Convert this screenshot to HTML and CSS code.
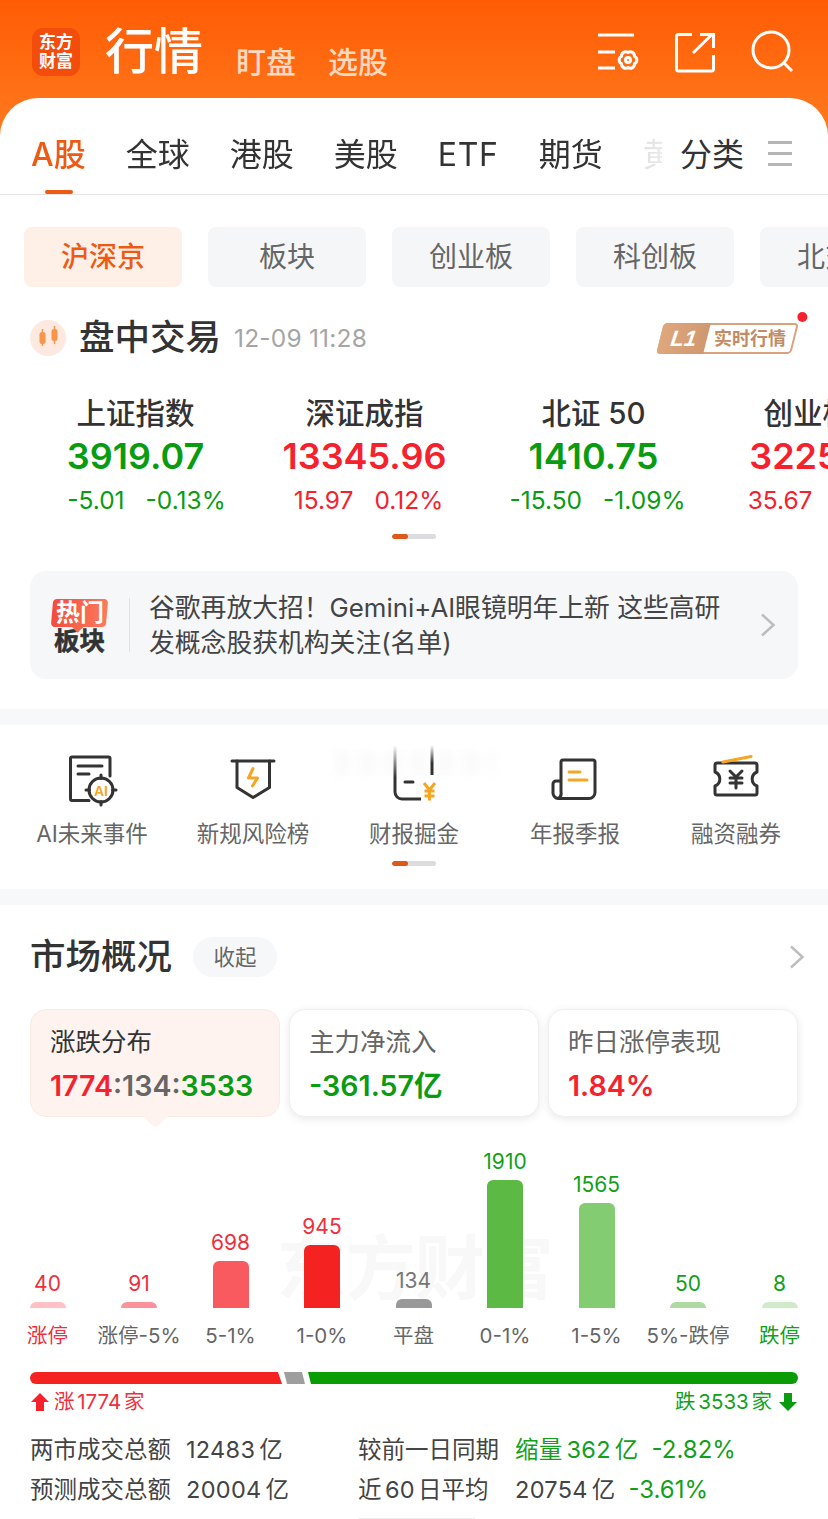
FILE: index.html
```html
<!DOCTYPE html>
<html lang="zh-CN">
<head>
<meta charset="utf-8">
<title>行情</title>
<link rel="stylesheet" href="styles.css">
</head>
<body>
<div class="page">
  <div class="top">
    <header class="header">
      <div class="logo"><span>东方</span><span>财富</span></div>
      <h1 class="title">行情</h1>
      <a class="subnav first">盯盘</a>
      <a class="subnav">选股</a>
      <div class="header-icons">
        <svg class="hicon" viewBox="0 0 44 44" fill="none" stroke="#fff" stroke-width="3">
          <path d="M2 5H38M2 22H19M2 38H19"/>
          <path d="M32 22.500A4.200 4.200 0 0 1 38.500 26.250A4.200 4.200 0 0 1 38.500 33.750A4.200 4.200 0 0 1 32 37.500A4.200 4.200 0 0 1 25.500 33.750A4.200 4.200 0 0 1 25.500 26.250A4.200 4.200 0 0 1 32 22.500z"/>
          <circle cx="32" cy="30" r="2.500"/>
        </svg>
        <svg class="hicon" viewBox="0 0 44 44" fill="none" stroke="#fff" stroke-width="3">
          <path d="M19 4.500H5.500a2 2 0 0 0-2 2V39a2 2 0 0 0 2 2H38.500a2 2 0 0 0 2-2V25"/>
          <path d="M20 23L39.500 4M27 4.500H40.500V18"/>
        </svg>
        <svg class="hicon" viewBox="0 0 44 44" fill="none" stroke="#fff" stroke-width="3">
          <circle cx="21" cy="20" r="18"/>
          <path d="M34 33L42 41"/>
        </svg>
      </div>
    </header>
    <nav class="tabs">
      <div class="tab-scroll">
        <a class="tab active">A股</a>
        <a class="tab">全球</a>
        <a class="tab">港股</a>
        <a class="tab">美股</a>
        <a class="tab latin">ETF</a>
        <a class="tab">期货</a>
        <a class="tab">黄金</a>
      </div>
      <a class="tab tab-fixed">分类</a>
      <span class="tab-menu"><i></i><i></i><i></i></span>
    </nav>
  </div>

  <div class="chips">
    <a class="chip active">沪深京</a>
    <a class="chip">板块</a>
    <a class="chip">创业板</a>
    <a class="chip">科创板</a>
    <a class="chip">北交所</a>
  </div>

  <div class="session">
    <span class="session-icon">
      <svg viewBox="0 0 36 36" width="36" height="36" fill="none" stroke="#f6964a">
        <path d="M12.500 9V26M24.500 6V24" stroke-width="1.500"/>
        <rect x="9.500" y="12" width="6" height="12" rx="2.500" fill="#f6964a" stroke="none"/>
        <rect x="21.500" y="9" width="6" height="12" rx="2.500" fill="#f6964a" stroke="none"/>
      </svg>
    </span>
    <h2 class="session-title">盘中交易</h2>
    <time class="session-time">12-09 11:28</time>
    <div class="badge">
      <span class="badge-l1"><em>L1</em></span>
      <span class="badge-text"><b>实时行情</b></span>
      <span class="badge-dot"></span>
    </div>
  </div>

  <div class="indices">
    <div class="index">
      <div class="index-name">上证指数</div>
      <div class="index-value down">3919.07</div>
      <div class="index-change down shift-l"><span>-5.01</span><span>-0.13%</span></div>
    </div>
    <div class="index">
      <div class="index-name">深证成指</div>
      <div class="index-value up">13345.96</div>
      <div class="index-change up shift-s"><span>15.97</span><span>0.12%</span></div>
    </div>
    <div class="index">
      <div class="index-name">北证 50</div>
      <div class="index-value down">1410.75</div>
      <div class="index-change down shift-s"><span>-15.50</span><span>-1.09%</span></div>
    </div>
    <div class="index">
      <div class="index-name">创业板指</div>
      <div class="index-value up">3225.29</div>
      <div class="index-change up"><span>35.67</span><span>1.12%</span></div>
    </div>
  </div>
  <div class="pager"><i></i></div>

  <a class="news">
    <div class="hot">
      <span class="hot-top"><b>热门</b></span>
      <span class="hot-bottom">板块</span>
    </div>
    <p class="news-text">谷歌再放大招！Gemini+AI眼镜明年上新 这些高研发概念股获机构关注(名单)</p>
    <svg class="chev" viewBox="0 0 16 24" fill="none" stroke="#bdbdc0" stroke-width="2.500"><path d="M2 1.500L13.500 12 2 22.500"/></svg>
  </a>

  <div class="divider"></div>

  <section class="tools">
    <div class="tool-row">
      <a class="tool">
        <svg class="tool-icon" viewBox="0 0 60 60" fill="none" stroke="#333" stroke-width="3" stroke-linecap="round" stroke-linejoin="round">
          <path d="M27 50.500H10a1.500 1.500 0 0 1-1.500-1.500V8.500A1.500 1.500 0 0 1 10 7H46.500A1.500 1.500 0 0 1 48 8.500V26"/>
          <path d="M16 16H40M16 24H27"/>
          <circle cx="39" cy="40" r="12"/>
          <path d="M39 25V28.500M39 51.500V55M24 40H27.500M50.500 40H54"/>
          <text class="ai-text" x="39" y="45.500" text-anchor="middle">AI</text>
        </svg>
        <span class="tool-label">AI未来事件</span>
      </a>
      <a class="tool">
        <svg class="tool-icon" viewBox="0 0 60 60" fill="none" stroke="#333" stroke-width="3" stroke-linecap="round" stroke-linejoin="round">
          <path d="M9 11H51"/>
          <path d="M14 11V37.500L30 47.500 46.500 37.500V11"/>
          <path d="M30 18.500L25.500 28H34.500L29.500 36" stroke="#f5a623"/>
        </svg>
        <span class="tool-label">新规风险榜</span>
      </a>
      <a class="tool">
        <span class="tool-blur"></span>
        <svg class="tool-icon" viewBox="0 0 60 60" fill="none" stroke="#333" stroke-width="3" stroke-linecap="round" stroke-linejoin="round">
          <defs>
            <linearGradient id="fadeUp" x1="0" y1="1" x2="0" y2="0">
              <stop offset="0.400" stop-color="#333"/>
              <stop offset="1" stop-color="#333" stop-opacity="0"/>
            </linearGradient>
          </defs>
          <path d="M11 -5V42a7 7 0 0 0 7 7H37" stroke="url(#fadeUp)" stroke-linecap="butt"/>
          <path d="M21 32H29"/>
          <rect x="46.500" y="-5" width="3" height="30" fill="url(#fadeUp)" stroke="none"/>
          <path d="M40 33L45.500 40 51 33M45.500 40V50.500M40.500 41H50.500M40.500 46H50.500" stroke="#f5a623" stroke-linecap="butt" stroke-linejoin="miter"/>
        </svg>
        <span class="tool-label">财报掘金</span>
      </a>
      <a class="tool">
        <svg class="tool-icon" viewBox="0 0 60 60" fill="none" stroke="#333" stroke-width="3" stroke-linecap="round" stroke-linejoin="round">
          <path d="M14 48.500H44a6 6 0 0 0 6-6V12a2 2 0 0 0-2-2H18a2 2 0 0 0-2 2V42a6 6 0 0 1-3 6.500A6 6 0 0 1 8 42V34a3 3 0 0 1 3-3H16"/>
          <path d="M24 22H35M24 30H42" stroke="#f5a623"/>
        </svg>
        <span class="tool-label">年报季报</span>
      </a>
      <a class="tool">
        <svg class="tool-icon" viewBox="0 0 60 60" fill="none" stroke="#333" stroke-width="3" stroke-linecap="round" stroke-linejoin="round">
          <path d="M11 13H49a2 2 0 0 1 2 2V22a7.500 7.500 0 0 0 0 14V43a2 2 0 0 1-2 2H11a2 2 0 0 1-2-2V36a7.500 7.500 0 0 0 0-14V15a2 2 0 0 1 2-2z"/>
          <path d="M17 12L45 6.500" stroke="#f5a623"/>
          <path d="M24 21L30 27 36 21M30 27V38M24 28H36M24 33H36"/>
        </svg>
        <span class="tool-label">融资融券</span>
      </a>
    </div>
    <div class="pager small"><i></i></div>
  </section>

  <div class="divider"></div>

  <section class="market">
    <div class="market-head">
      <h2 class="market-title">市场概况</h2>
      <a class="pill">收起</a>
      <svg class="chev" viewBox="0 0 16 24" fill="none" stroke="#bdbdc0" stroke-width="2.500"><path d="M2 1.500L13.500 12 2 22.500"/></svg>
    </div>
    <div class="cards">
      <div class="card active">
        <div class="card-title">涨跌分布</div>
        <div class="card-value"><span class="up">1774</span><span class="flat">:134:</span><span class="down">3533</span></div>
      </div>
      <div class="card">
        <div class="card-title">主力净流入</div>
        <div class="card-value down">-361.57亿</div>
      </div>
      <div class="card">
        <div class="card-title">昨日涨停表现</div>
        <div class="card-value up">1.84%</div>
      </div>
    </div>

    <div class="chart">
      <div class="watermark">东方财富</div>
      <div class="col"><span class="val up2">40</span><i class="bar b1" style="height:6px"></i><span class="lab up2">涨停</span></div>
      <div class="col"><span class="val up2">91</span><i class="bar b2" style="height:6px"></i><span class="lab">涨停-5%</span></div>
      <div class="col"><span class="val up2">698</span><i class="bar b3" style="height:47px"></i><span class="lab">5-1%</span></div>
      <div class="col"><span class="val up2">945</span><i class="bar b4" style="height:63px"></i><span class="lab">1-0%</span></div>
      <div class="col"><span class="val grey">134</span><i class="bar b5" style="height:9px"></i><span class="lab">平盘</span></div>
      <div class="col"><span class="val dn2">1910</span><i class="bar b6" style="height:128px"></i><span class="lab">0-1%</span></div>
      <div class="col"><span class="val dn2">1565</span><i class="bar b7" style="height:105px"></i><span class="lab">1-5%</span></div>
      <div class="col"><span class="val dn2">50</span><i class="bar b8" style="height:6px"></i><span class="lab">5%-跌停</span></div>
      <div class="col"><span class="val dn2">8</span><i class="bar b9" style="height:6px"></i><span class="lab dn2">跌停</span></div>
    </div>

    <div class="ratio">
      <i class="ratio-up"></i><i class="ratio-flat"></i><i class="ratio-down"></i>
    </div>
    <div class="legend">
      <span class="legend-item up2">
        <svg class="arrow" viewBox="0 0 18 18"><path d="M9 0L18 9H13V18H5V9H0z" fill="#f5222d"/></svg><span>涨 1774 家</span>
      </span>
      <span class="legend-item dn2"><span>跌 3533 家</span>
        <svg class="arrow right" viewBox="0 0 18 18"><path d="M9 18L18 9H13V0H5V9H0z" fill="#0a9c10"/></svg>
      </span>
    </div>

    <div class="stats">
      <div class="stat-row">
        <span class="stat-label">两市成交总额</span><span class="stat-val">12483 亿</span>
        <span class="stat-label second">较前一日同期</span><span class="stat-val dn2">缩量 362 亿</span><span class="stat-pct dn2">-2.82%</span>
      </div>
      <div class="stat-row">
        <span class="stat-label">预测成交总额</span><span class="stat-val">20004 亿</span>
        <span class="stat-label second">近 60 日平均</span><span class="stat-val">20754 亿</span><span class="stat-pct dn2">-3.61%</span>
      </div>
    </div>
    <div class="handle"></div>
  </section>
</div>
</body>
</html>
```
FILE: styles.css
```css
* { box-sizing: border-box; }
html, body { margin: 0; padding: 0; background: #fff; }
body {
  font-family: "Inter", "Noto Sans CJK SC", sans-serif;
  color: #333;
}
a { color: inherit; text-decoration: none; }
h1, h2, p { margin: 0; font-weight: inherit; }
i, em { font-style: normal; }

.page { width: 828px; height: 1519px; overflow: hidden; position: relative; }

.up { color: #f5222d; }
.down { color: #0a9c10; }
.flat { color: #666; }
.up2 { color: #ee2f3c; }
.dn2 { color: #12a01a; }
.grey { color: #777; }

/* top */
.top {
  background: linear-gradient(180deg, #ff5c05 0, #ff7a1e 135px) no-repeat;
  background-size: 100% 135px;
}
.header { height: 98px; display: flex; align-items: flex-start; padding: 28px 34px 0 32px; }
.logo {
  width: 48px; height: 48px; border-radius: 11px;
  background: #f24d0c;
  color: #fff; font-family: "Liberation Serif", "Noto Sans CJK SC", serif;
  font-weight: 700; font-size: 17px; line-height: 19px;
  display: flex; flex-direction: column; align-items: center; justify-content: center;
}
.title { margin: -6px 0 0 25px; font-size: 49px; line-height: 60px; font-weight: 500; color: #fff; letter-spacing: 0; }
.subnav { font-size: 30px; line-height: 40px; margin: 14px 0 0 32px; color: #ffd9c0; font-weight: 500; }
.subnav.first { margin-left: 33px; }
.header-icons { margin-left: auto; display: flex; gap: 33px; margin-top: 2px; }
.hicon { width: 44px; height: 44px; display: block; }

.tabs {
  height: 97px; background: #fff; border-radius: 38px 38px 0 0;
  border-bottom: 1px solid #e6e6e6;
  display: flex; align-items: flex-start; padding: 36px 0 0 31px;
}
.tab-scroll {
  display: flex; gap: 40px; width: 631px; overflow: hidden; flex: none;
  -webkit-mask-image: linear-gradient(90deg, #000 92%, rgba(0,0,0,.15) 97%, rgba(0,0,0,.1) 100%);
  mask-image: linear-gradient(90deg, #000 92%, rgba(0,0,0,.15) 97%, rgba(0,0,0,.1) 100%);
  height: 60px;
}
.tab { font-size: 32px; line-height: 42px; color: #333; white-space: nowrap; position: relative; flex: none; }
.tab.latin { letter-spacing: .7px; }
.tab.active { color: #ee5a13; font-weight: 500; }
.tab.active::after {
  content: ""; position: absolute; left: 14px; top: 56px; width: 28px; height: 4px;
  background: #ee5a13; border-radius: 2px;
}
.tab-fixed { margin-left: 18px; }
.tab-menu { margin: 7px 0 0 24px; width: 24px; display: flex; flex-direction: column; gap: 8px; }
.tab-menu i { height: 3px; background: #b5b5b5; display: block; }

/* chips */
.chips { display: flex; gap: 26px; padding: 32px 0 0 24px; overflow: hidden; }
.chip {
  flex: none; width: 158px; height: 60px; border-radius: 8px;
  background: #f5f6f8; color: #666; font-size: 28px; line-height: 60px; text-align: center;
  white-space: nowrap; overflow: hidden;
}
.chip.active { background: #feefe7; color: #ee5a13; font-weight: 500; }

/* session */
.session { margin-top: 23px; height: 56px; padding: 0 30px; display: flex; align-items: center; position: relative; }
.session-icon { width: 36px; height: 36px; border-radius: 50%; background: #fde9df; display: block; flex: none; }
.session-icon svg { display: block; }
.session-title { margin-left: 13px; font-size: 35.500px; font-weight: 500; line-height: 44px; color: #333; }
.session-time { margin-left: 13px; font-size: 24.500px; color: #a5a5a5; letter-spacing: .2px; }

.badge {
  margin-left: auto; margin-right: 3px; width: 135px; height: 31px;
  border: 2px solid #d7a27c; border-radius: 4px; transform: skewX(-14deg);
  display: flex; position: relative; background: #fff;
}
.badge-l1 {
  width: 47px; margin: -2px 0 -2px -2px; border-radius: 4px 0 0 4px;
  background: linear-gradient(90deg, #dfa77c, #cf9870);
  display: flex; align-items: center; justify-content: center;
}
.badge-l1 em { color: #fff; font: italic 700 22px/1 "Liberation Sans", sans-serif; transform: skewX(6deg); }
.badge-text { flex: 1; text-align: center; line-height: 27px; font-size: 18px; color: #c48a63; }
.badge-text b { display: inline-block; transform: skewX(14deg); font-weight: 700; }
.badge-dot {
  position: absolute; right: -9px; top: -13px; width: 10px; height: 10px; border-radius: 50%;
  background: #f5222d; transform: skewX(14deg);
}

/* indices */
.indices { display: flex; padding: 30px 0 0 21px; width: 1100px; }
.index { flex: none; width: 229px; text-align: center; }
.index-name { font-size: 29.500px; line-height: 34px; font-weight: 500; color: #333; }
.index-value { font-weight: 600; font-size: 36px; line-height: 46px; margin-top: 3px; white-space: nowrap; }
.index-change { margin-top: 6px; font-size: 24.500px; line-height: 30px; display: flex; justify-content: center; gap: 21px; }
.shift-l { padding-left: 22px; }
.shift-s { padding-left: 8px; }

.pager { width: 44px; height: 5px; border-radius: 3px; background: #dcdcdf; margin: 19px 0 32px 392px; overflow: hidden; }
.pager i { display: block; width: 16px; height: 100%; background: #e0571c; border-radius: 3px; }
.pager.small { margin: 12px 0 0 392px; }

/* news */
.news {
  margin: 0 30px 30px; height: 108px; border-radius: 16px; background: #f6f7f9;
  display: flex; align-items: center; padding: 0 22px 0 21px;
}
.hot { width: 57px; flex: none; display: flex; flex-direction: column; align-items: center; }
.hot-top {
  width: 55px; height: 28px; background: linear-gradient(90deg, #f44c3c, #fa7a5e);
  border-radius: 4px; transform: skewX(-5deg); position: relative;
  display: block; text-align: center; line-height: 27px; color: #fff; font-size: 24px;
}
.hot-top b { display: inline-block; font-weight: 700; transform: skewX(5deg); }
.hot-top::after {
  content: ""; position: absolute; left: 23px; bottom: -4px; width: 8px; height: 8px;
  background: #f9664f; transform: rotate(45deg);
}
.hot-bottom { margin-top: 2px; font-size: 25.500px; line-height: 23px; font-weight: 700; color: #333; -webkit-text-stroke: .5px #333; }
.news-text {
  margin-left: 21px; padding: 0 25px 0 20px; flex: 1; font-size: 25.800px; line-height: 35px; color: #444;
  position: relative;
}
.news-text::before {
  content: ""; position: absolute; left: 0; top: 8px; bottom: 8px; width: 1px; background: #e2e2e4;
}
.chev { width: 16px; height: 24px; flex: none; }

.divider { height: 16px; background: #f7f8fa; }

/* tools */
.tools { height: 164px; padding-top: 25px; }
.tool-row { display: grid; grid-template-columns: repeat(5, 161px); padding-left: 11.500px; }
.tool { display: flex; flex-direction: column; align-items: center; position: relative; }
.tool-icon { width: 60px; height: 60px; overflow: visible; display: block; position: relative; }
.ai-text { font: 700 14px "Liberation Sans", sans-serif; fill: #f5a623; stroke: none; }
.tool-blur {
  position: absolute; left: 0; right: 0; top: 0; height: 26px;
  background: repeating-linear-gradient(90deg, #f8f8f8 0 14px, #fdfdfd 14px 26px);
  filter: blur(3px); opacity: .5;
}
.tool-label { margin-top: 9px; font-size: 22.500px; line-height: 30px; color: #666; white-space: nowrap; }

/* market */
.market { padding: 32px 30px 0; }
.market-head { height: 40px; display: flex; align-items: center; margin-bottom: 32px; }
.market-title { font-size: 35.500px; font-weight: 500; color: #333; line-height: 44px; }
.pill {
  margin-left: 21px; width: 84px; height: 40px; border-radius: 20px; background: #f6f7f9;
  font-size: 21.500px; line-height: 40px; text-align: center; color: #666;
}
.market-head .chev { margin-left: auto; margin-right: -7px; }

.cards { display: grid; grid-template-columns: repeat(3, 250px); gap: 9px; }
.card {
  height: 108px; border-radius: 16px; background: #fff; border: 1px solid #f0f0f0;
  box-shadow: 0 2px 8px rgba(0,0,0,.09); padding: 14px 19px 0; position: relative;
}
.card-title { font-size: 25.500px; line-height: 36px; color: #666; }
.card-value { font-weight: 600; font-size: 28.600px; line-height: 36px; margin-top: 8px; white-space: nowrap; }
.card.active { background: #fef3ef; border-color: #fbe9e2; box-shadow: none; }
.card.active .card-title { color: #333; }
.card.active::after {
  content: ""; position: absolute; left: 116px; bottom: -9px; width: 17px; height: 17px;
  background: #fef3ef; transform: rotate(45deg); border-radius: 0 0 3px 0;
}

/* chart */
.chart {
  margin: 12px 0 0 -28.250px; width: 823.500px; height: 222px; position: relative;
  display: grid; grid-template-columns: repeat(9, 91.500px); align-items: end;
}
.watermark {
  position: absolute; left: 275px; top: 100px; font-size: 70px; line-height: 80px; font-weight: 700;
  color: #f8f8f8; letter-spacing: -1px; white-space: nowrap;
}
.col { display: flex; flex-direction: column; align-items: center; position: relative; }
.val { font-size: 21px; line-height: 26px; margin-bottom: 5px; }
.bar { width: 36px; display: block; border-radius: 6px 6px 0 0; }
.lab { font-size: 20.500px; line-height: 30px; margin-top: 13px; color: #666; white-space: nowrap; }
.lab.up2 { color: #ee2f3c; }
.lab.dn2 { color: #12a01a; }
.b1 { background: #ffc1c5; }
.b2 { background: #f9929a; }
.b3 { background: #f95a5f; }
.b4 { background: #f52222; }
.b5 { background: #999; }
.b6 { background: #5bb944; }
.b7 { background: #84cc72; }
.b8 { background: #aed9a3; }
.b9 { background: #d1ebca; }

.ratio { margin-top: 21px; height: 12px; display: flex; border-radius: 6px; overflow: hidden; }
.ratio i { display: block; height: 100%; flex: none; }
.ratio-up { width: 252px; background: #f52222; clip-path: polygon(0 0, 248px 0, 252px 100%, 0 100%); }
.ratio-flat { width: 21px; margin-left: 2px; background: #9e9e9e; clip-path: polygon(0 0, 18px 0, 21px 100%, 3px 100%); }
.ratio-down { width: 493px; margin-left: 3px; background: #0a9c03; clip-path: polygon(0 0, 100% 0, 100% 100%, 3px 100%); }

.legend { margin-top: 6px; height: 24px; padding: 0 1px; display: flex; justify-content: space-between; align-items: center; font-size: 20.500px; line-height: 24px; word-spacing: -3px; }
.legend-item { display: flex; align-items: center; gap: 5px; white-space: nowrap; }
.arrow { width: 18px; height: 18px; display: block; }
.arrow.right { margin-left: 2px; }

.stats { margin-top: 16px; }
.stat-row { height: 40px; display: flex; align-items: center; font-size: 23.500px; line-height: 40px; color: #444; white-space: nowrap; word-spacing: -3px; }
.stat-label { width: 156px; flex: none; }
.stat-val { flex: none; letter-spacing: .3px; }
.stat-row > .stat-val:nth-child(2) { width: 172px; }
.stat-label.second { width: 157px; }
.stat-pct { margin-left: 13px; font-size: 24px; }
.handle { width: 117px; height: 2px; background: #eee; margin: 8px 0 0 328px; }
```
